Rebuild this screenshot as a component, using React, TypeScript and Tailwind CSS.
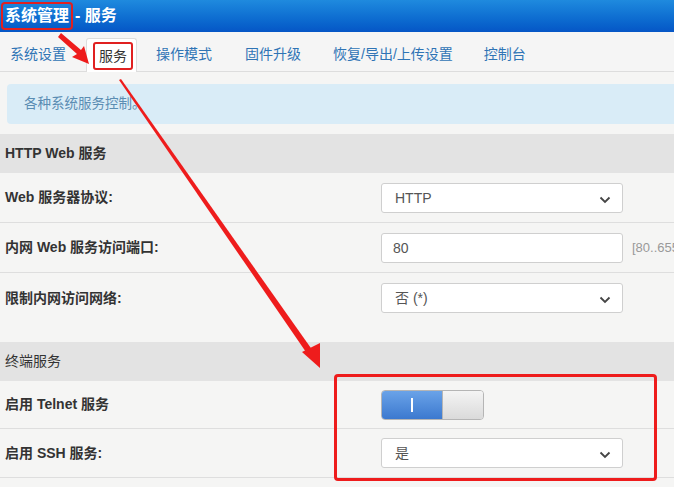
import React from 'react';

const FONT = { fontFamily: '"Liberation Sans", Arial, "Noto Sans CJK SC", sans-serif' };

const tabs = [
  { name: '系统设置', ml: 'ml-0' },
  { name: '服务', ml: 'ml-[20px]', active: true },
  { name: '操作模式', ml: 'ml-[19px]' },
  { name: '固件升级', ml: 'ml-[33px]' },
  { name: '恢复/导出/上传设置', ml: 'ml-[32px]' },
  { name: '控制台', ml: 'ml-[31px]' },
];

const Chevron = () => (
  <svg width="12" height="8" viewBox="0 0 12 8" className="absolute right-[11px] top-[12px]">
    <path d="M1.5 1.5 L6 6 L10.5 1.5" fill="none" stroke="#444" strokeWidth="1.8" />
  </svg>
);

const Select: React.FC<{ value: string }> = ({ value }) => (
  <div className="relative h-[30px] w-[242px] rounded-[3px] border border-[#cfcfcf] bg-white pl-[13px] text-[14px] leading-[28px] text-[#555]">
    {value}
    <Chevron />
  </div>
);

const Row: React.FC<{ label: string; h?: string; children: React.ReactNode }> = ({ label, h = 'h-[50px]', children }) => (
  <div className={`flex ${h} items-center border-b border-[#dedede]`}>
    <div className="w-[381px] pl-[5px] text-[14px] font-bold text-[#333]">{label}</div>
    <div className="flex items-center">{children}</div>
  </div>
);

export default function App() {
  return (
    <div className="relative h-[487px] w-[674px] overflow-hidden bg-[#f5f5f4]" style={FONT}>
      <div className="w-[760px]">
        {/* header */}
        <div className="flex h-[32px] items-center bg-gradient-to-b from-[#1f8ade] to-[#0656c6] pl-[5px] text-[16px] font-bold text-white">
          <span className="-ml-[2px] rounded-[2px] px-[2px] outline outline-[2px] outline-[#e02020]">系统管理</span>
          <span className="ml-[4px]">- 服务</span>
        </div>

        {/* tabs */}
        <div className="flex h-[40px] items-end border-b border-[#dddddd] bg-[#f5f5f5] pl-[10px]">
          {tabs.map((t) =>
            t.active ? (
              <div
                key={t.name}
                className={`${t.ml} -mb-px flex h-[34px] items-center rounded-t-[3px] border border-b-0 border-[#dddddd] bg-white pl-[6px] pr-[3px] text-[14px] text-[#333]`}
              >
                <span className="rounded-[3px] border-2 border-[#e02020] px-[4px] py-[3px] leading-[18px]">{t.name}</span>
              </div>
            ) : (
              <div key={t.name} className={`${t.ml} flex h-[34px] items-center text-[14px] text-[#2f74b5]`}>
                {t.name}
              </div>
            )
          )}
        </div>

        {/* info */}
        <div className="ml-[7px] mt-[12px] flex h-[40px] items-center rounded-[4px] bg-[#d9ecf7] pl-[17px] text-[13.5px] text-[#5b8db3]">
          各种系统服务控制。
        </div>

        {/* HTTP section */}
        <div className="mt-[10px] flex h-[39px] items-center bg-[#e3e3e3] pl-[5px] text-[14px] font-bold text-[#333]">
          HTTP Web 服务
        </div>
        <Row label="Web 服务器协议:">
          <Select value="HTTP" />
        </Row>
        <Row label="内网 Web 服务访问端口:">
          <div className="h-[30px] w-[242px] rounded-[3px] border border-[#cfcfcf] bg-white pl-[11px] text-[14px] leading-[28px] text-[#555]">80</div>
          <span className="ml-[9px] text-[13px] text-[#999]">[80..65535]</span>
        </Row>
        <div className="h-[69px] pt-[10px]">
          <div className="flex h-[30px] items-center">
            <div className="w-[381px] pl-[5px] text-[14px] font-bold text-[#333]">限制内网访问网络:</div>
            <Select value="否 (*)" />
          </div>
        </div>

        {/* terminal section */}
        <div className="flex h-[39px] items-center bg-[#e3e3e3] pl-[5px] text-[14px] text-[#333]">终端服务</div>
        <Row label="启用 Telnet 服务" h="h-[48px]">
          <div className="flex h-[30px] w-[103px] overflow-hidden rounded-[4px] border border-[#b5b5b5]">
            <div className="flex w-[60px] items-center justify-center bg-gradient-to-b from-[#6aa3e8] to-[#3c79cf]">
              <div className="h-[14px] w-[2px] bg-white" />
            </div>
            <div className="flex-1 border-l border-[#b5b5b5] bg-gradient-to-b from-[#f4f4f4] to-[#dadada]" />
          </div>
        </Row>
        <Row label="启用 SSH 服务:" h="h-[49px]">
          <Select value="是" />
        </Row>
      </div>

      {/* annotations */}
      <div className="pointer-events-none absolute left-[334px] top-[374px] h-[107px] w-[323px] rounded-[4px] border-[3px] border-[#ee1c1c]" />
      <svg className="pointer-events-none absolute left-0 top-0" width="674" height="487">
        {/* short arrow */}
        <polygon points="61,33 81,50 84,46 89,64 72,57 77,54 58,37" fill="#ee1c1c" />
        {/* long arrow */}
        <polygon points="119,80 121,79 313,351 308,355" fill="#ee1c1c" />
        <polygon points="302,352 320,343 320,368" fill="#ee1c1c" />
      </svg>
    </div>
  );
}
